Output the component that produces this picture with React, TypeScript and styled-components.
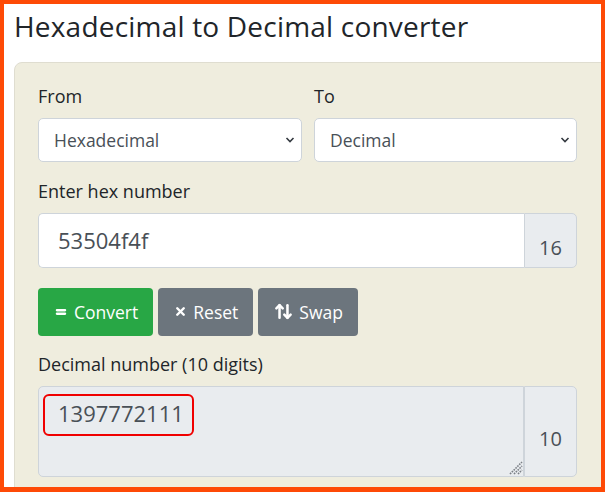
import styled, { createGlobalStyle } from "styled-components";
import { ArrowUpDown, Equal, X } from "lucide-react";

const GlobalStyle = createGlobalStyle`
  html, body {
    margin: 0;
    padding: 0;
    background: #ffffff;
  }
  * {
    box-sizing: border-box;
  }
  body {
    font-family: "Open Sans", "Noto Sans", "Liberation Sans", sans-serif;
    color: #212529;
  }
`;

const Frame = styled.div`
  width: 605px;
  height: 492px;
  border: 4px solid #fe4a06;
  border-bottom-width: 5px;
  overflow: hidden;
  padding: 0 0 0 10px;
`;

const Title = styled.h1`
  margin: 6px 0 0;
  font-size: 28px;
  font-weight: 400;
  line-height: 1.2;
  letter-spacing: 0.2px;
  color: #212529;
  white-space: nowrap;
`;

const Card = styled.div`
  margin-top: 18px;
  width: 600px;
  background: #efedde;
  border: 1px solid #dfddd0;
  border-radius: 8px;
  padding: 20px 23px 30px;
`;

const Row = styled.div`
  display: grid;
  grid-template-columns: 264px 263px;
  column-gap: 12px;
  margin-bottom: 16px;
`;

const Group = styled.div<{ $gap?: number }>`
  margin-bottom: ${(p) => p.$gap ?? 16}px;
`;

const Label = styled.label`
  display: block;
  font-size: 18px;
  line-height: 27px;
  margin-bottom: 8px;
  color: #212529;
`;

const SelectWrap = styled.div`
  position: relative;
`;

const Select = styled.select`
  appearance: none;
  width: 100%;
  height: 44px;
  padding: 0 30px 0 15px;
  font-family: inherit;
  font-size: 17.5px;
  color: #495057;
  background: #ffffff;
  border: 1px solid #ced4da;
  border-radius: 5px;
`;

const Chevron = styled.svg`
  position: absolute;
  right: 7px;
  top: 18px;
  pointer-events: none;
`;

const InputGroup = styled.div<{ $h: number }>`
  position: relative;
  display: flex;
  height: ${(p) => p.$h}px;
  width: 539px;
`;

const TextInput = styled.input`
  flex: 1;
  min-width: 0;
  height: 100%;
  padding: 0 19px;
  font-family: inherit;
  font-size: 22px;
  color: #495057;
  background: #ffffff;
  border: 1px solid #ced4da;
  border-right: none;
  border-radius: 5px 0 0 5px;
  outline: none;
`;

const TextArea = styled.textarea`
  flex: 1;
  min-width: 0;
  height: 100%;
  padding: 8px 19px;
  font-family: inherit;
  font-size: 22px;
  line-height: 36px;
  color: #495057;
  background: #e9ecef;
  border: 1px solid #ced4da;
  border-radius: 5px 0 0 5px;
  resize: none;
  outline: none;
`;

const Grip = styled.svg`
  position: absolute;
  left: 471px;
  bottom: 2px;
  pointer-events: none;
`;

const Addon = styled.div`
  width: 53px;
  display: flex;
  align-items: center;
  justify-content: center;
  padding-top: 14px;
  font-size: 20px;
  color: #495057;
  background: #e9ecef;
  border: 1px solid #ced4da;
  border-radius: 0 5px 5px 0;
`;

const Highlight = styled.div`
  position: absolute;
  left: 5px;
  top: 8px;
  width: 151px;
  height: 42px;
  border: 2px solid #f00000;
  border-radius: 6px;
  pointer-events: none;
`;

const Buttons = styled.div`
  display: flex;
  gap: 5px;
  margin: 20px 0 15px;
`;

const Button = styled.button<{ $variant: "success" | "secondary" }>`
  display: inline-flex;
  align-items: center;
  gap: 6px;
  height: 48px;
  padding: 0 15px 0 16px;
  font-family: inherit;
  font-size: 17.5px;
  color: #ffffff;
  background: ${(p) => (p.$variant === "success" ? "#28a745" : "#6c757d")};
  border: none;
  border-radius: 4px;
`;

const SelectChevron = () => (
  <Chevron width="10" height="8" viewBox="0 0 10 8">
    <path d="M1.5 2l3.5 3.5L8.5 2" fill="none" stroke="#343a40" strokeWidth="1.6" />
  </Chevron>
);

const App = () => {
  return (
    <>
      <GlobalStyle />
      <Frame>
        <Title>Hexadecimal to Decimal converter</Title>
        <Card>
          <Row>
            <div>
              <Label>From</Label>
              <SelectWrap>
                <Select defaultValue="hex">
                  <option value="hex">Hexadecimal</option>
                </Select>
                <SelectChevron />
              </SelectWrap>
            </div>
            <div>
              <Label>To</Label>
              <SelectWrap>
                <Select defaultValue="dec">
                  <option value="dec">Decimal</option>
                </Select>
                <SelectChevron />
              </SelectWrap>
            </div>
          </Row>
          <Group $gap={0}>
            <Label>Enter hex number</Label>
            <InputGroup $h={55}>
              <TextInput defaultValue="53504f4f" />
              <Addon>16</Addon>
            </InputGroup>
          </Group>
          <Buttons>
            <Button $variant="success">
              <Equal size={14} strokeWidth={4} />
              Convert
            </Button>
            <Button $variant="secondary">
              <X size={13} strokeWidth={4.5} />
              Reset
            </Button>
            <Button $variant="secondary">
              <ArrowUpDown size={19} strokeWidth={3.2} />
              Swap
            </Button>
          </Buttons>
          <Group>
            <Label>Decimal number (10 digits)</Label>
            <InputGroup $h={91}>
              <TextArea readOnly defaultValue="1397772111" />
              <Addon>10</Addon>
              <Highlight />
              <Grip width="14" height="14" viewBox="0 0 14 14">
                <g stroke="#7a7f85" strokeWidth="1.6" strokeDasharray="1.6 1" fill="none">
                  <path d="M1 13L13 1" />
                  <path d="M5 13L13 5" />
                  <path d="M9 13L13 9" />
                </g>
              </Grip>
            </InputGroup>
          </Group>
        </Card>
      </Frame>
    </>
  );
};

export default App;
